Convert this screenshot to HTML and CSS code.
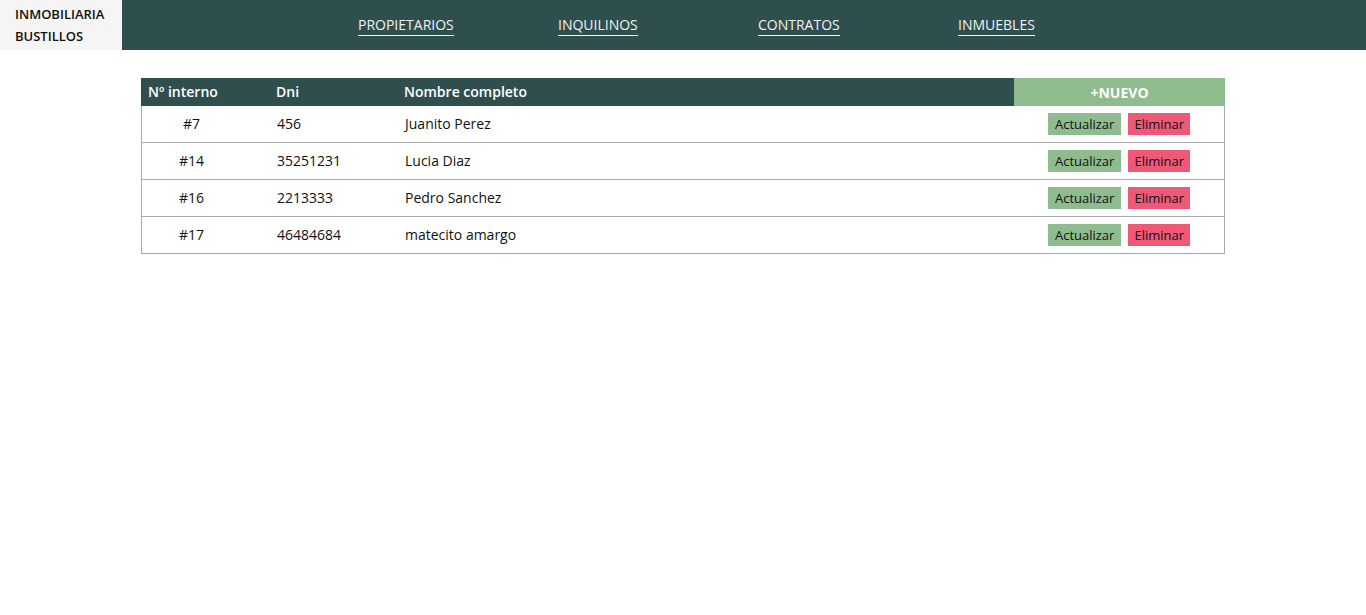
FILE: index.html
```html
<!DOCTYPE html>
<html lang="es">
<head>
<meta charset="utf-8">
<title>Inmobiliaria Bustillos</title>
<link rel="stylesheet" href="styles.css">
</head>
<body>
<header class="topbar">
  <div class="brand">INMOBILIARIA<br>BUSTILLOS</div>
  <nav class="nav">
    <a class="nav-link" href="#">PROPIETARIOS</a>
    <a class="nav-link" href="#">INQUILINOS</a>
    <a class="nav-link" href="#">CONTRATOS</a>
    <a class="nav-link" href="#">INMUEBLES</a>
  </nav>
</header>
<main class="content">
  <div class="table">
    <div class="row head">
      <div class="cell">Nº interno</div>
      <div class="cell">Dni</div>
      <div class="cell">Nombre completo</div>
      <div class="cell new">+NUEVO</div>
    </div>
    <div class="row body">
      <div class="cell num">#7</div>
      <div class="cell">456</div>
      <div class="cell">Juanito Perez</div>
      <div class="cell actions"><button class="btn upd">Actualizar</button><button class="btn del">Eliminar</button></div>
    </div>
    <div class="row body">
      <div class="cell num">#14</div>
      <div class="cell">35251231</div>
      <div class="cell">Lucia Diaz</div>
      <div class="cell actions"><button class="btn upd">Actualizar</button><button class="btn del">Eliminar</button></div>
    </div>
    <div class="row body">
      <div class="cell num">#16</div>
      <div class="cell">2213333</div>
      <div class="cell">Pedro Sanchez</div>
      <div class="cell actions"><button class="btn upd">Actualizar</button><button class="btn del">Eliminar</button></div>
    </div>
    <div class="row body">
      <div class="cell num">#17</div>
      <div class="cell">46484684</div>
      <div class="cell">matecito amargo</div>
      <div class="cell actions"><button class="btn upd">Actualizar</button><button class="btn del">Eliminar</button></div>
    </div>
  </div>
</main>
</body>
</html>
```
FILE: styles.css
```css
* { box-sizing: border-box; }
body {
  margin: 0;
  font-family: "Open Sans", "Liberation Sans", sans-serif;
  color: #111;
  background: #fff;
}
.topbar {
  display: flex;
  height: 50px;
  background: #2f4f4f;
}
.brand {
  width: 122px;
  flex: none;
  background: #f5f5f5;
  padding: 3px 0 0 15px;
  font-size: 13px;
  font-weight: 600;
  line-height: 22px;
  color: #111;
}
.nav {
  display: grid;
  grid-template-columns: repeat(4, 200px);
  align-items: start;
  padding: 15px 0 0 236px;
}
.nav-link {
  justify-self: start;
  color: #f2f2f2;
  font-size: 14px;
  line-height: 19px;
  padding-bottom: 1px;
  text-decoration: none;
  border-bottom: 1.5px solid #f2f2f2;
}
.content {
  padding: 28px 141px;
}
.table {
  width: 1084px;
  font-size: 14px;
}
.row {
  display: grid;
  align-items: center;
}
.row.head {
  grid-template-columns: 128px 128px 617px 211px;
  height: 28px;
  background: #2f4f4f;
  color: #fff;
  font-weight: 600;
  padding-bottom: 1px;
}
.row.body {
  grid-template-columns: 127px 128px 617px 210px;
  height: 37px;
  border-left: 1px solid #aaa;
  border-right: 1px solid #aaa;
  border-bottom: 1px solid #aaa;
  padding-bottom: 1px;
}
.cell {
  padding-left: 7px;
  white-space: nowrap;
}
.row.body .cell { padding-left: 8px; }
.row.body .cell.num {
  text-align: center;
  padding: 0 28px 0 0;
}
.cell.new {
  align-self: stretch;
  background: #8fbc8f;
  display: flex;
  align-items: center;
  justify-content: center;
  padding: 0;
  margin-bottom: -1px;
  font-weight: 700;
  color: #fff;
}
.row.body .cell.actions {
  display: flex;
  justify-content: center;
  gap: 7px;
  padding: 0;
}
.btn {
  height: 22px;
  border: none;
  padding: 0 6px;
  font-family: inherit;
  font-size: 13px;
  color: #111;
  cursor: pointer;
}
.btn.upd { background: #8fbc8f; padding: 0 7px; }
.btn.del { background: #f05878; }
```
